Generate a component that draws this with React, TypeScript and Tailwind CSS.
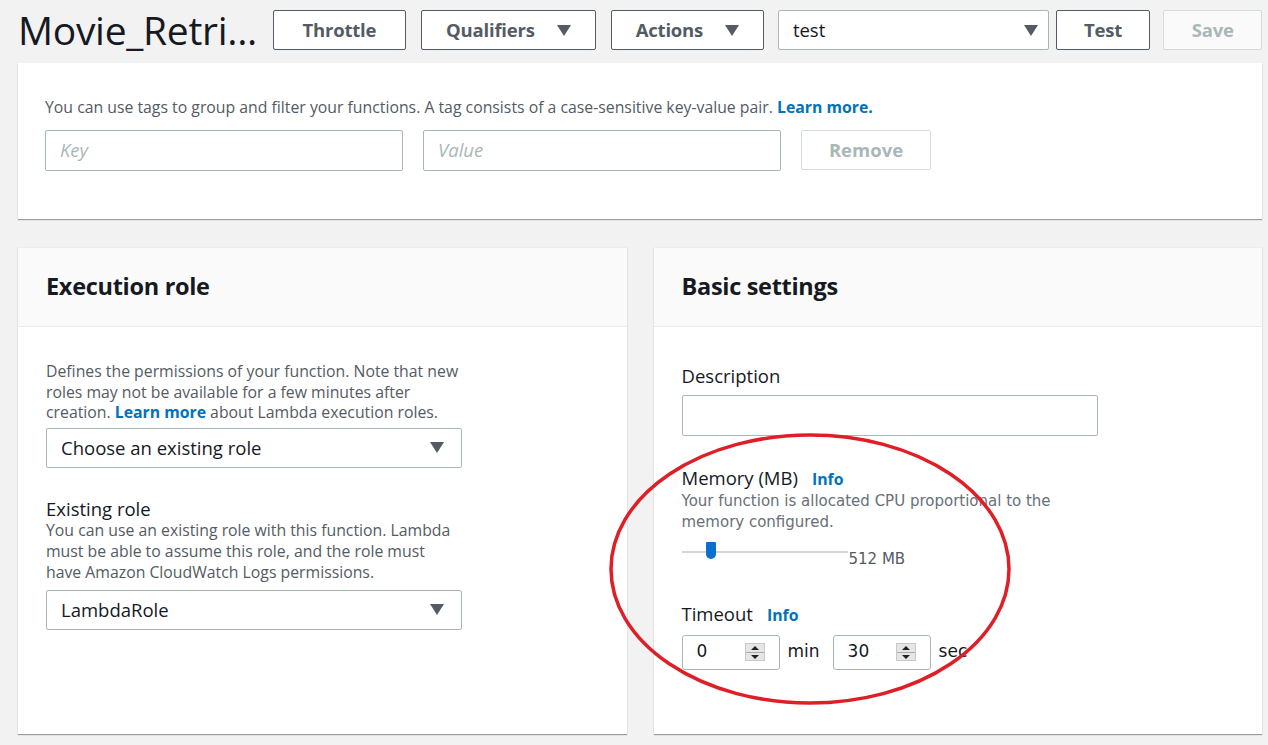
import React from "react";

const font = "font-['Open_Sans',sans-serif]";

function Caret() {
  return (
    <svg width="14" height="11" viewBox="0 0 14 11" className="shrink-0">
      <path d="M0 0 H14 L7 11 Z" fill="#545b64" />
    </svg>
  );
}

function Button({ label, caret, disabled }: { label: string; caret?: boolean; disabled?: boolean }) {
  return (
    <div
      className={`h-10 flex items-center justify-center gap-[22px] rounded-[2px] border text-[18.5px] font-bold tracking-[-0.2px] ${
        disabled ? "border-[#d5dbdb] text-[#aab7b8] bg-[#fafafa]" : "border-[#545b64] text-[#545b64] bg-white"
      }`}
    >
      <span>{label}</span>
      {caret && <Caret />}
    </div>
  );
}

function Select({ value, width }: { value: string; width: string }) {
  return (
    <div className={`${width} h-10 flex items-center justify-between pl-[14px] pr-[17px] bg-white border border-[#aab7b8] rounded-[2px] text-[18.5px] text-[#16191f]`}>
      <span>{value}</span>
      <Caret />
    </div>
  );
}

function Spinner({ value }: { value: string }) {
  return (
    <div className="w-[98px] h-[35px] flex items-center justify-between pl-[14px] pr-[14px] bg-white border border-[#aab7b8] rounded-[3px] text-[17px] text-[#16191f] font-['DejaVu_Sans',sans-serif]">
      <span>{value}</span>
      <div className="w-5 h-[18px] bg-[#e6e6e6] border border-[#c8c8c8] flex flex-col items-center justify-center gap-[2px]">
        <svg width="8" height="4" viewBox="0 0 8 4"><path d="M0 4 L4 0 L8 4 Z" fill="#222" /></svg>
        <div className="w-full h-px bg-[#aaa]" />
        <svg width="8" height="4" viewBox="0 0 8 4"><path d="M0 0 L8 0 L4 4 Z" fill="#222" /></svg>
      </div>
    </div>
  );
}

function Card({ title, children }: { title: string; children: React.ReactNode }) {
  return (
    <div className="flex-1 bg-white shadow-[0_1px_1px_rgba(0,0,0,0.35)] border-t border-[#eaeded] flex flex-col">
      <div className="h-[79px] bg-[#fafafa] border-b border-[#eaeded] flex items-center px-7">
        <h2 className="text-[23.5px] font-bold text-[#16191f] tracking-[-0.3px]">{title}</h2>
      </div>
      <div className="flex-1 px-7">{children}</div>
    </div>
  );
}

export default function App() {
  return (
    <div className={`relative w-[1268px] h-[745px] overflow-hidden bg-[#f2f2f2] ${font}`}>
      {/* Header */}
      <div className="h-[63px] flex items-start pt-[10px] pl-[18px] pr-[6px]">
        <h1 className="w-[256px] text-[39px] leading-[40px] text-[#16191f] tracking-[-0.3px] whitespace-nowrap">Movie_Retri...</h1>
        <div className="flex gap-[15px]">
          <div className="w-[133px]"><Button label="Throttle" /></div>
          <div className="w-[175px]"><Button label="Qualifiers" caret /></div>
          <div className="w-[153px]"><Button label="Actions" caret /></div>
        </div>
        <div className="ml-[14px] w-[272px] h-10 flex items-center justify-between pl-[14px] pr-[10px] bg-white border border-[#aab7b8] rounded-[2px] text-[18.5px] text-[#16191f]">
          <span>test</span>
          <Caret />
        </div>
        <div className="ml-[7px] w-[95px]"><Button label="Test" /></div>
        <div className="ml-[13px] w-[99px]"><Button label="Save" disabled /></div>
      </div>

      {/* Tags card */}
      <div className="ml-[18px] mr-[6px] h-[156px] bg-white shadow-[0_1px_1px_rgba(0,0,0,0.35)] px-[27px] pt-[33px]">
        <p className="text-[15.8px] text-[#545b64] whitespace-nowrap">
          You can use tags to group and filter your functions. A tag consists of a case-sensitive key-value pair.{" "}
          <span className="font-bold text-[#0073bb]">Learn more.</span>
        </p>
        <div className="flex gap-[20px] mt-[10px]">
          <div className="w-[358px] h-[41px] border border-[#aab7b8] rounded-[2px] flex items-center px-[14px] italic text-[18.5px] text-[#aab7b8]">Key</div>
          <div className="w-[358px] h-[41px] border border-[#aab7b8] rounded-[2px] flex items-center px-[14px] italic text-[18.5px] text-[#aab7b8]">Value</div>
          <div className="w-[130px] h-[40px] border border-[#d5dbdb] rounded-[2px] flex items-center justify-center font-bold text-[18.5px] text-[#aab7b8]">Remove</div>
        </div>
      </div>

      {/* Two cards */}
      <div className="ml-[18px] mr-[6px] mt-[28px] h-[487px] flex gap-[27px]">
        <Card title="Execution role">
          <p className="mt-[34px] w-[430px] text-[15.8px] leading-[20.5px] text-[#545b64]">
            Defines the permissions of your function. Note that new roles may not be available for a few minutes after creation.{" "}
            <span className="font-bold text-[#0073bb]">Learn more</span> about Lambda execution roles.
          </p>
          <div className="mt-[5px]"><Select value="Choose an existing role" width="w-[416px]" /></div>
          <div className="mt-[30px] text-[18.5px] text-[#16191f] leading-[22px]">Existing role</div>
          <p className="w-[418px] text-[15.8px] leading-[21px] text-[#545b64]">
            You can use an existing role with this function. Lambda must be able to assume this role, and the role must have Amazon CloudWatch Logs permissions.
          </p>
          <div className="mt-[7px]"><Select value="LambdaRole" width="w-[416px]" /></div>
        </Card>
        <Card title="Basic settings">
          <div className="mt-[38px] text-[18.5px] text-[#16191f] leading-[22px]">Description</div>
          <div className="mt-[8px] w-[416px] h-[41px] border border-[#aab7b8] rounded-[2px] bg-white" />
          <div className="mt-[31px] flex items-baseline gap-[14px] leading-[22px]">
            <span className="text-[18.5px] text-[#16191f]">Memory (MB)</span>
            <span className="text-[15.8px] font-bold text-[#0073bb]">Info</span>
          </div>
          <p className="mt-[1px] w-[400px] text-[15px] leading-[21px] text-[#687078] font-['DejaVu_Sans',sans-serif]">
            Your function is allocated CPU proportional to the memory configured.
          </p>
          <div className="mt-[9px] flex items-start">
            <div className="relative w-[166px] h-[20px] flex items-center">
              <div className="w-full h-[2px] bg-[#d5d5d5]" />
              <div className="absolute left-[24px] top-[0px] w-[10px] h-[17px] bg-[#0a6fd0] rounded-b-[5px] rounded-t-[1px]" />
            </div>
            <span className="mt-[6px] ml-[1px] text-[15px] text-[#545b64] font-['DejaVu_Sans',sans-serif]">512 MB</span>
          </div>
          <div className="mt-[32px] flex items-baseline gap-[14px] leading-[22px]">
            <span className="text-[18.5px] text-[#16191f]">Timeout</span>
            <span className="text-[15.8px] font-bold text-[#0073bb]">Info</span>
          </div>
          <div className="mt-[9px] flex items-center gap-[8px] text-[18.5px] text-[#16191f]">
            <Spinner value="0" />
            <span className="mr-[5px] font-['DejaVu_Sans',sans-serif] text-[17px]">min</span>
            <Spinner value="30" />
            <span className="font-['DejaVu_Sans',sans-serif] text-[17px]">sec</span>
          </div>
        </Card>
      </div>

      {/* Red annotation ellipse */}
      <svg className="absolute left-0 top-0 pointer-events-none" width="1268" height="745">
        <ellipse cx="810" cy="569" rx="199" ry="134" fill="none" stroke="#e01e26" strokeWidth="3.5" />
      </svg>
    </div>
  );
}
